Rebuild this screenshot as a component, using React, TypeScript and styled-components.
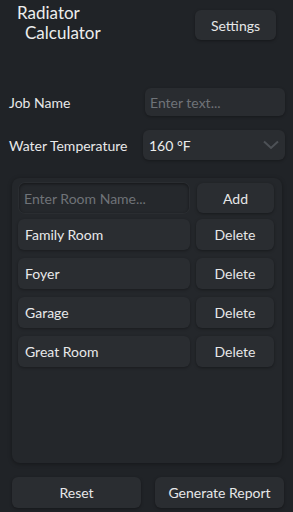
import React from "react";
import styled, { createGlobalStyle } from "styled-components";

const Global = createGlobalStyle`
  html, body { margin: 0; padding: 0; background: #202327; }
  body { font-family: "Lato", "Noto Sans", sans-serif; color: #e6e7e8; }
  * { box-sizing: border-box; }
`;

const Page = styled.div`
  width: 293px;
  height: 512px;
  background: #202327;
  display: flex;
  flex-direction: column;
  overflow: hidden;
`;

const Header = styled.div`
  display: flex;
  justify-content: space-between;
  align-items: flex-start;
  padding: 3px 17px 0 17px;
  height: 88px;
`;

const Title = styled.div`
  font-size: 17px;
  line-height: 20px;
  color: #eceded;
  display: flex;
  flex-direction: column;
`;

const TitleLine = styled.span<{ $indent?: number }>`
  padding-left: ${(p) => p.$indent ?? 0}px;
`;

const Button = styled.button<{ $w?: number; $h?: number }>`
  width: ${(p) => p.$w ?? 78}px;
  height: ${(p) => p.$h ?? 30}px;
  background: #2a2d31;
  border: none;
  border-radius: 6px;
  color: #e6e7e8;
  font-family: inherit;
  font-size: 14px;
  box-shadow: 0 1px 3px rgba(0, 0, 0, 0.35);
  padding: 0;
`;

const SettingsButton = styled(Button)`
  margin-top: 7px;
`;

const FieldRow = styled.div`
  display: flex;
  align-items: center;
  justify-content: space-between;
  padding: 0 8px 0 9px;
  margin-bottom: 14px;
`;

const Label = styled.span`
  font-size: 14px;
  color: #e8e9ea;
`;

const TextInput = styled.div`
  width: 140px;
  height: 28px;
  background: #292c30;
  border-radius: 6px;
  display: flex;
  align-items: center;
  padding-left: 5px;
  font-size: 14px;
  color: #6f7378;
  box-shadow: 0 1px 3px rgba(0, 0, 0, 0.3);
`;

const Select = styled.div`
  width: 142px;
  height: 30px;
  background: #2a2d31;
  border-radius: 6px;
  display: flex;
  align-items: center;
  justify-content: space-between;
  padding: 0 6px 0 6px;
  font-size: 14px;
  color: #eceded;
  box-shadow: 0 1px 3px rgba(0, 0, 0, 0.3);
`;

const Panel = styled.div`
  margin: 4px 11px 0 12px;
  height: 285px;
  background: #24272b;
  border-radius: 8px;
  padding: 5px 8px 0 6px;
  display: flex;
  flex-direction: column;
  gap: 8px;
  box-shadow: 0 1px 4px rgba(0, 0, 0, 0.35);
`;

const RoomRow = styled.div<{ $tight?: boolean }>`
  display: flex;
  justify-content: space-between;
  align-items: center;
  margin-bottom: ${(p) => (p.$tight ? -2 : 0)}px;
`;

const RoomInput = styled.div`
  width: 170px;
  height: 30px;
  background: #25282c;
  border-radius: 6px;
  display: flex;
  align-items: center;
  padding-left: 5px;
  font-size: 14px;
  color: #6f7378;
  box-shadow: inset 0 1px 3px rgba(0, 0, 0, 0.45), 0 0 0 1px #2a2d31;
  margin-left: 1px;
`;

const RoomName = styled.div`
  width: 172px;
  height: 31px;
  background: #2a2d31;
  border-radius: 6px;
  display: flex;
  align-items: center;
  padding-left: 7px;
  font-size: 14px;
  color: #e8e9ea;
  box-shadow: 0 1px 3px rgba(0, 0, 0, 0.3);
`;

const Footer = styled.div`
  display: flex;
  justify-content: space-between;
  padding: 14px 9px 0 12px;
`;

const rooms = ["Family Room", "Foyer", "Garage", "Great Room"];

const Chevron = () => (
  <svg width="16" height="10" viewBox="0 0 16 10">
    <path d="M1 1.5 L8 8 L15 1.5" fill="none" stroke="#4d5156" strokeWidth="2" />
  </svg>
);

export default function App() {
  return (
    <Page>
      <Global />
      <Header>
        <Title>
          <TitleLine>Radiator</TitleLine>
          <TitleLine $indent={8}>Calculator</TitleLine>
        </Title>
        <SettingsButton $w={81} $h={30}>Settings</SettingsButton>
      </Header>
      <FieldRow>
        <Label>Job Name</Label>
        <TextInput>Enter text...</TextInput>
      </FieldRow>
      <FieldRow>
        <Label>Water Temperature</Label>
        <Select>
          <span>160 °F</span>
          <Chevron />
        </Select>
      </FieldRow>
      <Panel>
        <RoomRow $tight>
          <RoomInput>Enter Room Name...</RoomInput>
          <Button $w={77} $h={30}>Add</Button>
        </RoomRow>
        {rooms.map((r) => (
          <RoomRow key={r}>
            <RoomName>{r}</RoomName>
            <Button $w={78} $h={31}>Delete</Button>
          </RoomRow>
        ))}
      </Panel>
      <Footer>
        <Button $w={129} $h={31}>Reset</Button>
        <Button $w={129} $h={31}>Generate Report</Button>
      </Footer>
    </Page>
  );
}
